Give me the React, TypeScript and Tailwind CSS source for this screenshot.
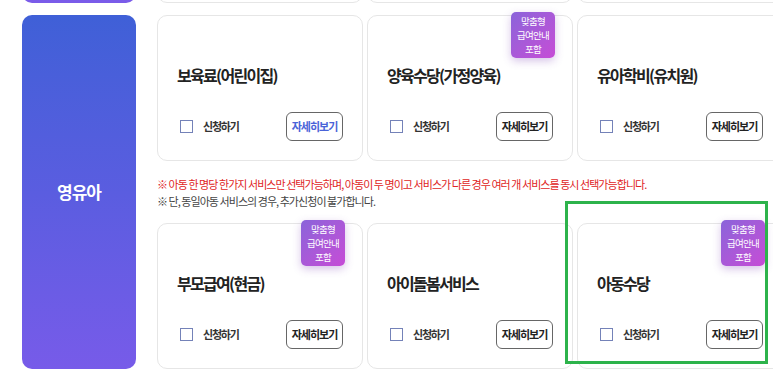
import React from "react";

type CardData = { title: string; badge?: boolean; blue?: boolean; empty?: boolean };

function Badge() {
  return (
    <div className="absolute top-[-4px] right-[17px] w-[44px] h-[46px] rounded-[5px] bg-linear-to-br from-[#8a63da] to-[#c64bd6] shadow-[0_3px_8px_rgba(120,60,180,0.3)] flex flex-col items-center justify-center text-white text-[9.5px] leading-[14px] tracking-[-0.8px]">
      <span>맞춤형</span>
      <span>급여안내</span>
      <span>포함</span>
    </div>
  );
}

function Card({ title, badge, blue, empty }: CardData) {
  if (empty) {
    return <div className="w-[206px] h-[146px] shrink-0 rounded-[10px] border border-[#e6e6e6] bg-white" />;
  }
  return (
    <div className="relative w-[206px] h-[146px] shrink-0 rounded-[10px] border border-[#e6e6e6] bg-white flex flex-col pl-[19px] pr-[19px] pt-[47px] pb-[19px]">
      {badge && <Badge />}
      <div className="text-[16px] leading-[24px] font-bold text-[#222] tracking-[-1.7px]">{title}</div>
      <div className="mt-auto flex items-center justify-between">
        <div className="flex items-center ml-[3px]">
          <span className="w-[13px] h-[13px] border-[1.5px] border-[#7482b8] bg-white" />
          <span className="ml-[10px] text-[11px] font-bold text-[#333] tracking-[-1.2px]">신청하기</span>
        </div>
        <div
          className={
            "w-[57px] h-[29px] rounded-[6px] border border-[#666] flex items-center justify-center text-[11px] font-bold tracking-[-1px] " +
            (blue ? "text-[#4a63d8]" : "text-[#222]")
          }
        >
          자세히보기
        </div>
      </div>
    </div>
  );
}

function Row({ cards }: { cards: CardData[] }) {
  return (
    <div className="flex gap-[4px]">
      {cards.map((c, i) => (
        <Card key={i} {...c} />
      ))}
    </div>
  );
}

export default function App() {
  return (
    <div className="relative w-[773px] h-[382px] overflow-hidden bg-white font-['Noto_Sans_CJK_KR','Noto_Sans',sans-serif]">
      <div className="flex flex-col gap-[12px] pl-[22px] mt-[-143px]">
        <div className="flex gap-[21px] h-[146px]">
          <div className="w-[114px] shrink-0 rounded-[10px] bg-linear-to-b from-[#5a5de0] to-[#7a5be9]" />
          <Row cards={[{ title: "", empty: true }, { title: "", empty: true }, { title: "", empty: true }]} />
        </div>
        <div className="flex gap-[21px]">
          <div className="w-[114px] shrink-0 rounded-[10px] bg-linear-to-b from-[#3f60d7] via-[#5a5de0] to-[#775be9] flex items-center justify-center">
            <span className="text-white text-[17px] font-bold tracking-[-1px]">영유아</span>
          </div>
          <div className="flex flex-col">
            <Row
              cards={[
                { title: "보육료(어린이집)", blue: true },
                { title: "양육수당(가정양육)", badge: true },
                { title: "유아학비(유치원)" },
              ]}
            />
            <div className="h-[62px] pt-[15px] text-[11px] leading-[17px] tracking-[-0.95px]">
              <div className="text-[#e02424]">
                ※ 아동 한 명당 한가지 서비스만 선택가능하며, 아동이 두 명이고 서비스가 다른 경우 여러 개 서비스를 동시 선택가능합니다.
              </div>
              <div className="text-[#444]">※ 단, 동일아동 서비스의 경우, 추가신청이 불가합니다.</div>
            </div>
            <Row
              cards={[
                { title: "부모급여(현금)", badge: true },
                { title: "아이돌봄서비스" },
                { title: "아동수당", badge: true },
              ]}
            />
          </div>
        </div>
      </div>
      <div className="absolute left-[565px] top-[201px] w-[203px] h-[163px] border-[3px] border-[#2db34b]" />
    </div>
  );
}
